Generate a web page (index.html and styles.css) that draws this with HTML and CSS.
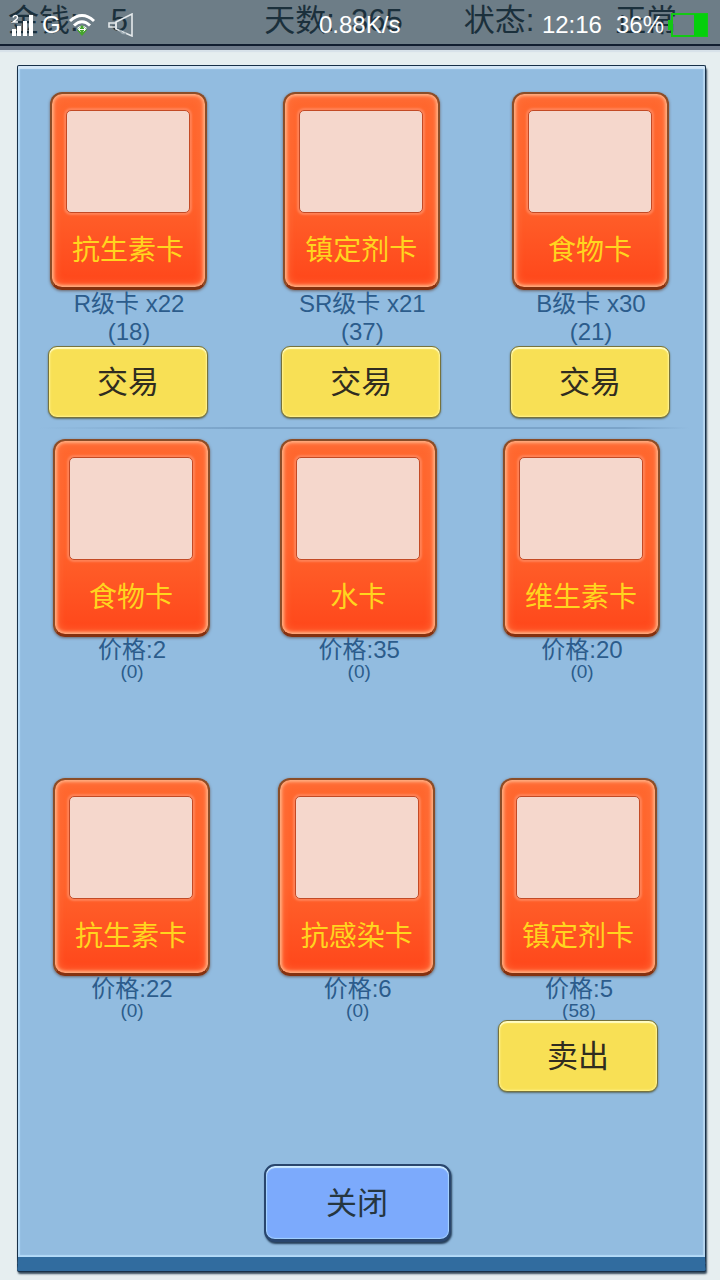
FILE: index.html
```
<!DOCTYPE html>
<html lang="zh-CN">
  <head>
    <meta charset="UTF-8" />
    <meta name="viewport" content="width=device-width, initial-scale=1.0" />
    <title>交易</title>
    <link rel="stylesheet" href="styles.css">
  </head>
  <body>
    <header class="top-bar">
      <dl class="stats">
        <div class="stat stat-money"><dt>金钱:</dt><dd>5</dd></div>
        <div class="stat stat-days"><dt>天数:</dt><dd>365</dd></div>
        <div class="stat stat-state"><dt>状态:</dt><dd>正常</dd></div>
      </dl>

      <!-- phone status bar, drawn over the game header -->
      <div class="status-bar">
        <div class="status-left">
          <svg width="22" height="22" viewBox="0 0 22 22" fill="#fff">
            <rect x="1" y="15" width="4" height="7"></rect>
            <rect x="6" y="12" width="4" height="10"></rect>
            <rect x="12" y="7" width="4" height="15"></rect>
            <rect x="18" y="1" width="4" height="21"></rect>
            <path d="M2 3.5Q2.5 1.500 4.500 1.500T6.500 3.500Q6.500 5 2 8H7" fill="none" stroke="#fff" stroke-width="1.4"></path>
          </svg>
          <span class="network">G</span>
          <svg width="28" height="24" viewBox="0 0 28 24" fill="none" stroke="#fff" stroke-width="3">
            <path d="M2 8Q14 -3 26 8"></path>
            <path d="M6 12.500Q14 5 22 12.500"></path>
            <path d="M10 16Q14 12 18 16" stroke-width="2.5"></path>
            <path d="M14 12L19 17L14 23L9 17Z" fill="#45a52c" stroke="none"></path>
            <path d="M10.5 16.5H17.5M12.5 14.5L10.5 16.5L12.5 18.5M15.5 14.5L17.5 16.5L15.5 18.5" stroke-width="1"></path>
          </svg>
          <svg class="speaker" width="26" height="24" viewBox="0 0 26 24" fill="none" stroke="#e4e9eb" stroke-width="1.6">
            <path d="M8 9L24 1V23L8 16Z"></path>
            <path d="M8 9V16M7 10H1V14H7"></path>
            <path d="M12 17Q14 22 18 20" stroke="#9daab2"></path>
          </svg>
        </div>
        <span class="speed">0.88K/s</span>
        <div class="status-right">
          <span>12:16</span>
          <span>36%</span>
        </div>
        <svg width="42" height="26" viewBox="0 0 42 26" fill="none">
          <rect x="5" y="2" width="35" height="22" stroke="#14c814" stroke-width="2"></rect>
          <rect x="1" y="8" width="4" height="10" fill="#14c814"></rect>
          <rect x="27" y="2" width="13" height="22" fill="#05cf0c"></rect>
        </svg>
      </div>
    </header>

    <main class="panel">
      <ul class="row row-trade">
        <li class="item">
          <div class="card"><div class="picture"></div><h2>抗生素卡</h2></div>
          <p>R级卡 x22</p>
          <p>(18)</p>
          <button type="button" class="btn">交易</button>
        </li>
        <li class="item">
          <div class="card"><div class="picture"></div><h2>镇定剂卡</h2></div>
          <p>SR级卡 x21</p>
          <p>(37)</p>
          <button type="button" class="btn">交易</button>
        </li>
        <li class="item">
          <div class="card"><div class="picture"></div><h2>食物卡</h2></div>
          <p>B级卡 x30</p>
          <p>(21)</p>
          <button type="button" class="btn">交易</button>
        </li>
      </ul>

      <hr class="divider">

      <ul class="row row-price">
        <li class="item">
          <div class="card"><div class="picture"></div><h2>食物卡</h2></div>
          <p class="price">价格:2</p>
          <p class="count">(0)</p>
        </li>
        <li class="item">
          <div class="card"><div class="picture"></div><h2>水卡</h2></div>
          <p class="price">价格:35</p>
          <p class="count">(0)</p>
        </li>
        <li class="item">
          <div class="card"><div class="picture"></div><h2>维生素卡</h2></div>
          <p class="price">价格:20</p>
          <p class="count">(0)</p>
        </li>
      </ul>

      <ul class="row row-sell">
        <li class="item">
          <div class="card"><div class="picture"></div><h2>抗生素卡</h2></div>
          <p class="price">价格:22</p>
          <p class="count">(0)</p>
        </li>
        <li class="item">
          <div class="card"><div class="picture"></div><h2>抗感染卡</h2></div>
          <p class="price">价格:6</p>
          <p class="count">(0)</p>
        </li>
        <li class="item">
          <div class="card"><div class="picture"></div><h2>镇定剂卡</h2></div>
          <p class="price">价格:5</p>
          <p class="count">(58)</p>
          <button type="button" class="btn">卖出</button>
        </li>
      </ul>

      <div class="actions">
        <button type="button" class="btn btn-close">关闭</button>
      </div>
    </main>
  </body>
</html>
```
FILE: styles.css
```
:root {
  --page-bg: #e6eef0;
  --panel-bg: #92bce0;
  --line: #183048;
  --caption: #2c5c8c;
  --strip: #316c9f;
}
* {
  box-sizing: border-box;
  margin: 0;
  padding: 0;
}
body {
  display: flex;
  flex-direction: column;
  min-height: 100vh;
  background: var(--page-bg);
  font-family: "Liberation Sans", "Noto Sans CJK SC", sans-serif;
}
ul {
  list-style: none;
}

/* header */
.top-bar {
  position: relative;
  height: 50px;
  background: linear-gradient(#6d7d87 44px, #111e30 44px, #111e30 46px, #6c7888 46px);
  box-shadow: 0 2px 1px #d8e2ea;
}
.stats {
  display: flex;
  height: 42px;
  padding-left: 8px;
  color: #1b303c;
  font-size: 31px;
  line-height: 42px;
}
.stat {
  display: flex;
  white-space: nowrap;
}
.stat-money {
  flex: 0 0 36%;
  gap: 32px;
}
.stat-days {
  flex: 0 0 28%;
  gap: 16px;
}
.stat-state {
  gap: 81px;
}
.status-bar {
  position: absolute;
  inset: 0;
  display: flex;
  align-items: center;
  padding: 0 11px;
  color: #fff;
  font-size: 24px;
}
.status-left {
  display: flex;
  align-items: center;
  flex: 0 0 308px;
}
.network {
  padding-left: 9px;
  margin-right: 7px;
}
.speaker {
  margin-left: 12px;
}
.status-right {
  display: flex;
  gap: 14px;
  margin-left: auto;
  margin-right: 3px;
}

/* panel */
.panel {
  flex: 1;
  display: flex;
  flex-direction: column;
  margin: 15px 14px 9px 17px;
  padding-top: 26px;
  background: var(--panel-bg);
  border: 1px solid var(--line);
  border-bottom: 14px solid var(--strip);
  border-radius: 2px;
  box-shadow: inset 0 3px 1px #d3e6f7, inset 2px -2px 1px #b4daf8, inset -2px 0 1px #b4d4ef,
    0 1px 0 var(--line), 1px 3px 2px #34495b;
}
.row {
  display: grid;
  grid-template-columns: 102fr 100fr 160px;
}
.row-trade {
  padding: 0 35px 0 30px;
}
.row-price {
  padding: 0 44px 0 33px;
  margin-bottom: 97px;
}
.row-sell {
  padding: 0 47px 0 33px;
}
.item {
  display: flex;
  flex-direction: column;
  align-items: center;
  width: 160px;
  color: var(--caption);
  font-size: 24px;
  line-height: 28px;
}
.item p {
  padding-left: 2px;
  white-space: nowrap;
}
.item .price {
  line-height: 26px;
}
.item .count {
  font-size: 19px;
  line-height: 18px;
}
.divider {
  height: 2px;
  margin: 9px 16px 10px 20px;
  border: 0;
  background: linear-gradient(90deg, transparent, #7ba4c9 30%, #7ba4c9 90%, transparent);
}

/* card */
.card {
  display: flex;
  flex-direction: column;
  align-items: center;
  width: 157px;
  height: 198px;
  padding-top: 16px;
  border: 2px solid #8a4d28;
  border-bottom: 3px solid #84310f;
  border-radius: 12px;
  background: linear-gradient(#ff682f, #ff622b 55%, #ff461a);
  box-shadow: inset 0 0 3px 2px #ffad81, inset 0 0 9px 2px #ff7945, 0 1px 3px #6c666a;
}
.picture {
  width: 124px;
  height: 103px;
  border: 1px solid #c34a25;
  border-radius: 5px;
  background: #f5d7cc;
  box-shadow: 0 0 2px 2px #ff8256;
}
.card h2 {
  margin-top: 17px;
  color: #ffd51f;
  font-size: 28px;
  font-weight: 400;
  line-height: 42px;
}

/* buttons */
.btn {
  width: 160px;
  height: 72px;
  padding-top: 2px;
  border: 1px solid #76723c;
  border-radius: 9px;
  background: #f8e055;
  box-shadow: inset 0 2px 1px #fffcc4, inset 0 0 2px 1px #fff394, 0 1px 2px #5d6c62;
  color: #302c20;
  font-family: inherit;
  font-size: 31px;
  line-height: 42px;
}
.actions {
  display: flex;
  justify-content: center;
  margin-top: 72px;
  padding: 0 9px 12px 0;
}
.btn-close {
  width: 187px;
  height: 78px;
  border: 2px solid #29466d;
  border-bottom-width: 3px;
  border-radius: 11px;
  background: #7caafc;
  box-shadow: inset 0 2px 1px #cdeaff, inset 0 0 1px 1px #a5d2ff, 1px 2px 2px #253e58;
  color: #263640;
}
```
